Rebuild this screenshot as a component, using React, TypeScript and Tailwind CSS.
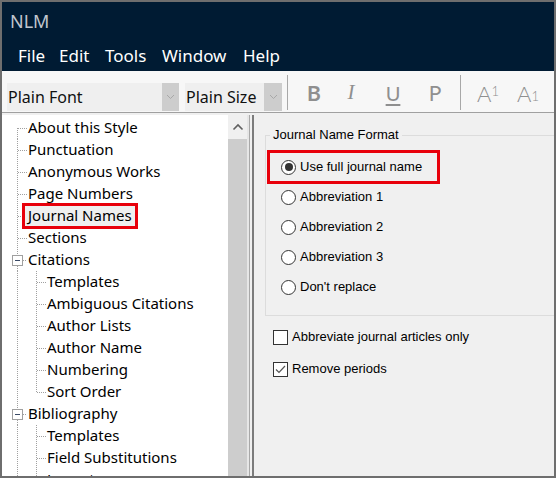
import React from "react";

type Row = {
  label: string;
  level: 1 | 2;
  expander?: boolean;
  first?: boolean;
  last?: boolean;
  highlight?: boolean;
};

const rows: Row[] = [
  { label: "About this Style", level: 1, first: true },
  { label: "Punctuation", level: 1 },
  { label: "Anonymous Works", level: 1 },
  { label: "Page Numbers", level: 1 },
  { label: "Journal Names", level: 1, highlight: true },
  { label: "Sections", level: 1 },
  { label: "Citations", level: 1, expander: true },
  { label: "Templates", level: 2 },
  { label: "Ambiguous Citations", level: 2 },
  { label: "Author Lists", level: 2 },
  { label: "Author Name", level: 2 },
  { label: "Numbering", level: 2 },
  { label: "Sort Order", level: 2, last: true },
  { label: "Bibliography", level: 1, expander: true },
  { label: "Templates", level: 2 },
  { label: "Field Substitutions", level: 2 },
  { label: "Layout", level: 2 },
];

const DOT = "#a0a0a0";

function Connector({ row }: { row: Row }) {
  if (row.level === 1) {
    return (
      <svg width="26" height="22" className="shrink-0">
        {row.expander ? (
          <>
            <line x1="15.5" y1="0" x2="15.5" y2="6" stroke={DOT} strokeDasharray="1 1" />
            <line x1="15.5" y1="17" x2="15.5" y2="22" stroke={DOT} strokeDasharray="1 1" />
            <rect x="10.5" y="6.5" width="10" height="10" fill="#ffffff" stroke="#a0a0a0" />
            <line x1="13" y1="11.5" x2="18" y2="11.5" stroke="#3a4a66" />
            <line x1="21" y1="11.5" x2="25" y2="11.5" stroke={DOT} strokeDasharray="1 1" />
          </>
        ) : (
          <>
            <line
              x1="15.5"
              y1={row.first ? 11 : 0}
              x2="15.5"
              y2="22"
              stroke={DOT}
              strokeDasharray="1 1"
            />
            <line x1="16" y1="11.5" x2="25" y2="11.5" stroke={DOT} strokeDasharray="1 1" />
          </>
        )}
      </svg>
    );
  }
  return (
    <svg width="45" height="22" className="shrink-0">
      <line x1="15.5" y1="0" x2="15.5" y2="22" stroke={DOT} strokeDasharray="1 1" />
      <line x1="34.5" y1="0" x2="34.5" y2={row.last ? 12 : 22} stroke={DOT} strokeDasharray="1 1" />
      <line x1="35" y1="11.5" x2="44" y2="11.5" stroke={DOT} strokeDasharray="1 1" />
    </svg>
  );
}

function TreeRow({ row }: { row: Row }) {
  return (
    <div className="h-[22px] flex items-center whitespace-nowrap">
      <Connector row={row} />
      {row.highlight ? (
        <span className="-ml-[6px] h-[26px] flex items-center border-[3px] border-[#e8000b] bg-[#efefef] pl-[3px] pr-[3px] pb-[2px] text-black">
          {row.label}
        </span>
      ) : (
        <span className="mb-[2px] text-black">{row.label}</span>
      )}
    </div>
  );
}

function ComboArrow() {
  return (
    <div className="h-full bg-[#cdcdcd] flex items-center justify-center shrink-0 w-full">
      <svg width="9" height="6" viewBox="0 0 9 6">
        <path d="M1 1 L4.5 4.5 L8 1" fill="none" stroke="#a8a8a8" strokeWidth="1" />
      </svg>
    </div>
  );
}

function Toolbar() {
  const letter = "text-[#8f8f8f]";
  return (
    <div className="h-[42px] bg-[#f7f7f7] border-b border-[#a0a0a0] flex items-end pb-[1px] pl-[5px]">
      <div className="w-[172px] h-[28px] bg-[#efefef] flex items-center">
        <span className="pl-[1px] flex-1 text-[16px] text-[#111]">Plain Font</span>
        <div className="w-[17px] h-full">
          <ComboArrow />
        </div>
      </div>
      <div className="ml-[6px] w-[97px] h-[28px] bg-[#efefef] flex items-center">
        <span className="pl-[1px] flex-1 text-[16px] text-[#111]">Plain Size</span>
        <div className="w-[18px] h-full">
          <ComboArrow />
        </div>
      </div>
      <div className="ml-[5px] w-[1px] h-[35px] mb-[1px] bg-[#a8a8a8]" />
      <div className={`ml-[11px] w-[30px] h-[36px] flex items-center justify-center font-['Lato',sans-serif] font-bold text-[21px] ${letter}`}>
        B
      </div>
      <div className={`ml-[7px] w-[30px] h-[36px] flex items-center justify-center font-['Liberation_Serif',serif] italic text-[21px] ${letter}`}>
        I
      </div>
      <div className={`ml-[12px] w-[30px] h-[36px] flex items-center justify-center font-['Lato',sans-serif] text-[20px] underline underline-offset-[3px] decoration-[2px] ${letter}`}>
        U
      </div>
      <div className={`ml-[12px] w-[30px] h-[36px] flex items-center justify-center font-['Lato',sans-serif] text-[21px] ${letter}`}>
        P
      </div>
      <div className="ml-[10px] w-[1px] h-[35px] mb-[1px] bg-[#a8a8a8]" />
      <div className={`ml-[12px] w-[30px] h-[36px] flex items-center justify-center font-['Lato',sans-serif] font-light text-[22px] ${letter}`}>
        <span>A</span>
        <span className="text-[13px] self-start mt-[7px]">1</span>
      </div>
      <div className={`ml-[10px] w-[30px] h-[36px] flex items-center justify-center font-['Lato',sans-serif] font-light text-[22px] ${letter}`}>
        <span>A</span>
        <span className="text-[13px] self-end mb-[5px]">1</span>
      </div>
    </div>
  );
}

function Radio({ checked }: { checked?: boolean }) {
  return (
    <span className="w-[15px] h-[15px] rounded-full border border-[#333333] bg-white flex items-center justify-center shrink-0">
      {checked && <span className="w-[8px] h-[8px] rounded-full bg-[#333333]" />}
    </span>
  );
}

function Checkbox({ checked }: { checked?: boolean }) {
  return (
    <span className="w-[15px] h-[15px] border border-[#333333] bg-white flex items-center justify-center shrink-0">
      {checked && (
        <svg width="13" height="13" viewBox="0 0 13 13">
          <path d="M2 6.5 L5 9.5 L11 3" fill="none" stroke="#555555" strokeWidth="1.2" />
        </svg>
      )}
    </span>
  );
}

function Panel() {
  return (
    <div className="flex-1 bg-[#f0f0f0] overflow-hidden pl-[10px] pt-[12px] font-['Liberation_Sans',Arial,sans-serif] text-[13px] text-black">
      <fieldset className="w-[292px] h-[189px] border border-[#dcdcdc]">
        <legend className="ml-[4px] px-[3px] leading-[16px]">Journal Name Format</legend>
        <div className="mt-[7px] ml-[1px] w-[173px] h-[34px] border-[3px] border-[#e8000b] pl-[11px] flex items-center gap-[4px]">
          <Radio checked />
          <span>Use full journal name</span>
        </div>
        <div className="-mt-[2px] h-[30px] pl-[15px] flex items-center gap-[4px]">
          <Radio />
          <span>Abbreviation 1</span>
        </div>
        <div className="h-[30px] pl-[15px] flex items-center gap-[4px]">
          <Radio />
          <span>Abbreviation 2</span>
        </div>
        <div className="h-[30px] pl-[15px] flex items-center gap-[4px]">
          <Radio />
          <span>Abbreviation 3</span>
        </div>
        <div className="h-[30px] pl-[15px] flex items-center gap-[4px]">
          <Radio />
          <span>Don't replace</span>
        </div>
      </fieldset>
      <div className="mt-[5px] h-[32px] ml-[8px] flex items-center gap-[4px]">
        <Checkbox />
        <span>Abbreviate journal articles only</span>
      </div>
      <div className="h-[32px] ml-[8px] flex items-center gap-[4px]">
        <Checkbox checked />
        <span>Remove periods</span>
      </div>
    </div>
  );
}

export default function App() {
  return (
    <div className="w-[556px] h-[478px] border-2 border-[#6e6e6e] bg-[#f0f0f0] flex flex-col overflow-hidden font-['Noto_Sans',sans-serif]">
      <div className="h-[69px] bg-[#001b33] flex flex-col shrink-0">
        <div className="h-[38px] flex items-center pl-[8px] text-[18px] text-[#c0c6ce]">NLM</div>
        <div className="flex-1 flex items-center pl-[16px] text-[17px] text-white">
          <span className="w-[41px]">File</span>
          <span className="w-[46px]">Edit</span>
          <span className="w-[57px]">Tools</span>
          <span className="w-[81px]">Window</span>
          <span>Help</span>
        </div>
      </div>
      <Toolbar />
      <div className="flex flex-1 min-h-0 pt-[2px]">
        <div className="w-[226px] bg-white pt-[2px] overflow-hidden text-[15px] shrink-0">
          {rows.map((r, i) => (
            <TreeRow key={i} row={r} />
          ))}
        </div>
        <div className="w-[19px] flex flex-col shrink-0">
          <div className="h-[24px] bg-[#f0f0f0] flex items-center justify-center">
            <svg width="19" height="24" viewBox="0 0 19 24">
              <path d="M5.5 14.5 L10 10 L14.5 14.5" fill="none" stroke="#606060" strokeWidth="1.6" />
            </svg>
          </div>
          <div className="flex-1 bg-[#cdcdcd]" />
        </div>
        <div className="w-[8px] flex shrink-0">
          <div className="w-[2px] bg-[#e6e6e6]" />
          <div className="w-[1px] bg-[#a8a8a8]" />
          <div className="w-[2px] bg-[#f0f0f0]" />
          <div className="w-[2px] bg-[#7c7c7c]" />
          <div className="w-[1px] bg-[#f0f0f0]" />
        </div>
        <Panel />
      </div>
    </div>
  );
}
